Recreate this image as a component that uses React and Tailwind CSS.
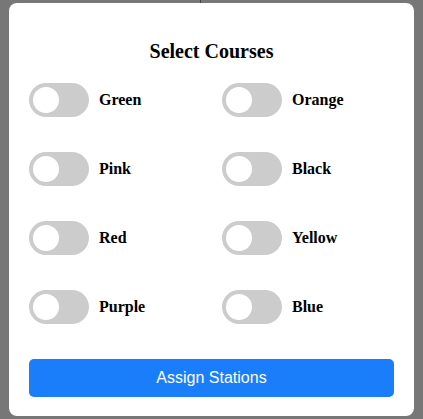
import React, { useState } from 'react';

const courses = ['Green', 'Orange', 'Pink', 'Black', 'Red', 'Yellow', 'Purple', 'Blue'];

const serif = { fontFamily: '"Liberation Serif", "Times New Roman", serif' };

function Toggle({ checked, onChange }) {
  return (
    <button
      type="button"
      onClick={onChange}
      className={`flex items-center w-[60px] h-[34px] p-[4px] rounded-full shrink-0 transition-colors ${checked ? 'bg-[#2196f3] justify-end' : 'bg-[#cccccc] justify-start'}`}
    >
      <span className="w-[26px] h-[26px] rounded-full bg-white" />
    </button>
  );
}

export default function App() {
  const [selected, setSelected] = useState({});

  const toggle = (name) => {
    setSelected({ ...selected, [name]: !selected[name] });
  };

  return (
    <div className="w-[423px] h-[419px] bg-[#777777] pl-[9px] pt-[3px] relative overflow-hidden">
      {/* thin line behind the modal */}
      <div className="absolute left-[200px] top-0 w-px h-[4px] bg-[#444444]" />
      <div className="relative w-[405px] h-[413px] bg-white rounded-[8px] px-[20px] pt-[36px]">
        <h2 className="text-center text-[20px] leading-[24px] font-bold text-black" style={serif}>
          Select Courses
        </h2>
        <div className="grid grid-cols-2 gap-x-[21px] gap-y-[35px] mt-[20px]">
          {courses.map((name) => (
            <div key={name} className="flex items-center gap-[10px]">
              <Toggle checked={!!selected[name]} onChange={() => toggle(name)} />
              <span className="text-[16px] font-bold text-black" style={serif}>
                {name}
              </span>
            </div>
          ))}
        </div>
        <button
          type="button"
          className="mt-[35px] w-full h-[38px] rounded-[5px] bg-[#1a7efb] text-white text-[16px]"
          style={{ fontFamily: '"Liberation Sans", Arial, sans-serif' }}
        >
          Assign Stations
        </button>
      </div>
    </div>
  );
}
